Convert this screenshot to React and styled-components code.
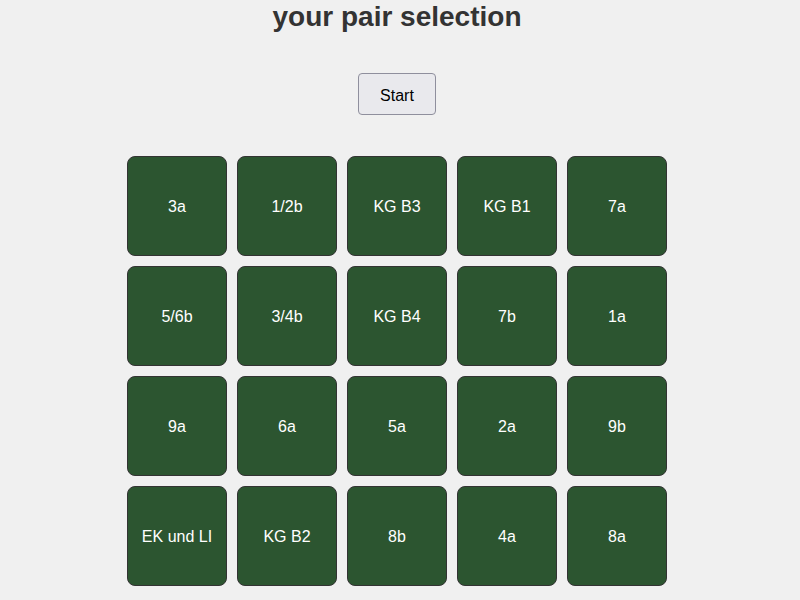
import React from "react";
import styled, { createGlobalStyle } from "styled-components";

const Global = createGlobalStyle`
  html, body { margin: 0; padding: 0; background: #f0f0f0; }
  body { font-family: "Liberation Sans", Arial, sans-serif; }
`;

const Page = styled.div`
  width: 794px;
  display: flex;
  flex-direction: column;
  align-items: center;
`;

const Title = styled.h1`
  margin: 0;
  padding-top: 1px;
  font-size: 28px;
  font-weight: bold;
  line-height: normal;
  color: #333333;
`;

const StartButton = styled.button`
  margin-top: 40px;
  width: 78px;
  height: 42px;
  font-family: "Liberation Sans", Arial, sans-serif;
  font-size: 16px;
  color: #000;
  background: #e9e9ed;
  border: 1px solid #8f8f9d;
  border-radius: 4px;
  padding: 3px 0 0 0;
`;

const Grid = styled.div`
  margin-top: 41px;
  display: grid;
  grid-template-columns: repeat(5, 100px);
  grid-auto-rows: 100px;
  gap: 10px;
`;

const Tile = styled.div`
  box-sizing: border-box;
  padding-top: 2px;
  background: #2c5530;
  border: 1px solid #333333;
  border-radius: 8px;
  color: #ffffff;
  font-size: 16px;
  display: flex;
  align-items: center;
  justify-content: center;
`;

const items = [
  "3a", "1/2b", "KG B3", "KG B1", "7a",
  "5/6b", "3/4b", "KG B4", "7b", "1a",
  "9a", "6a", "5a", "2a", "9b",
  "EK und LI", "KG B2", "8b", "4a", "8a",
];

export default function App() {
  return (
    <>
      <Global />
      <Page>
        <Title>your pair selection</Title>
        <StartButton>Start</StartButton>
        <Grid>
          {items.map((t) => (
            <Tile key={t}>{t}</Tile>
          ))}
        </Grid>
      </Page>
    </>
  );
}
